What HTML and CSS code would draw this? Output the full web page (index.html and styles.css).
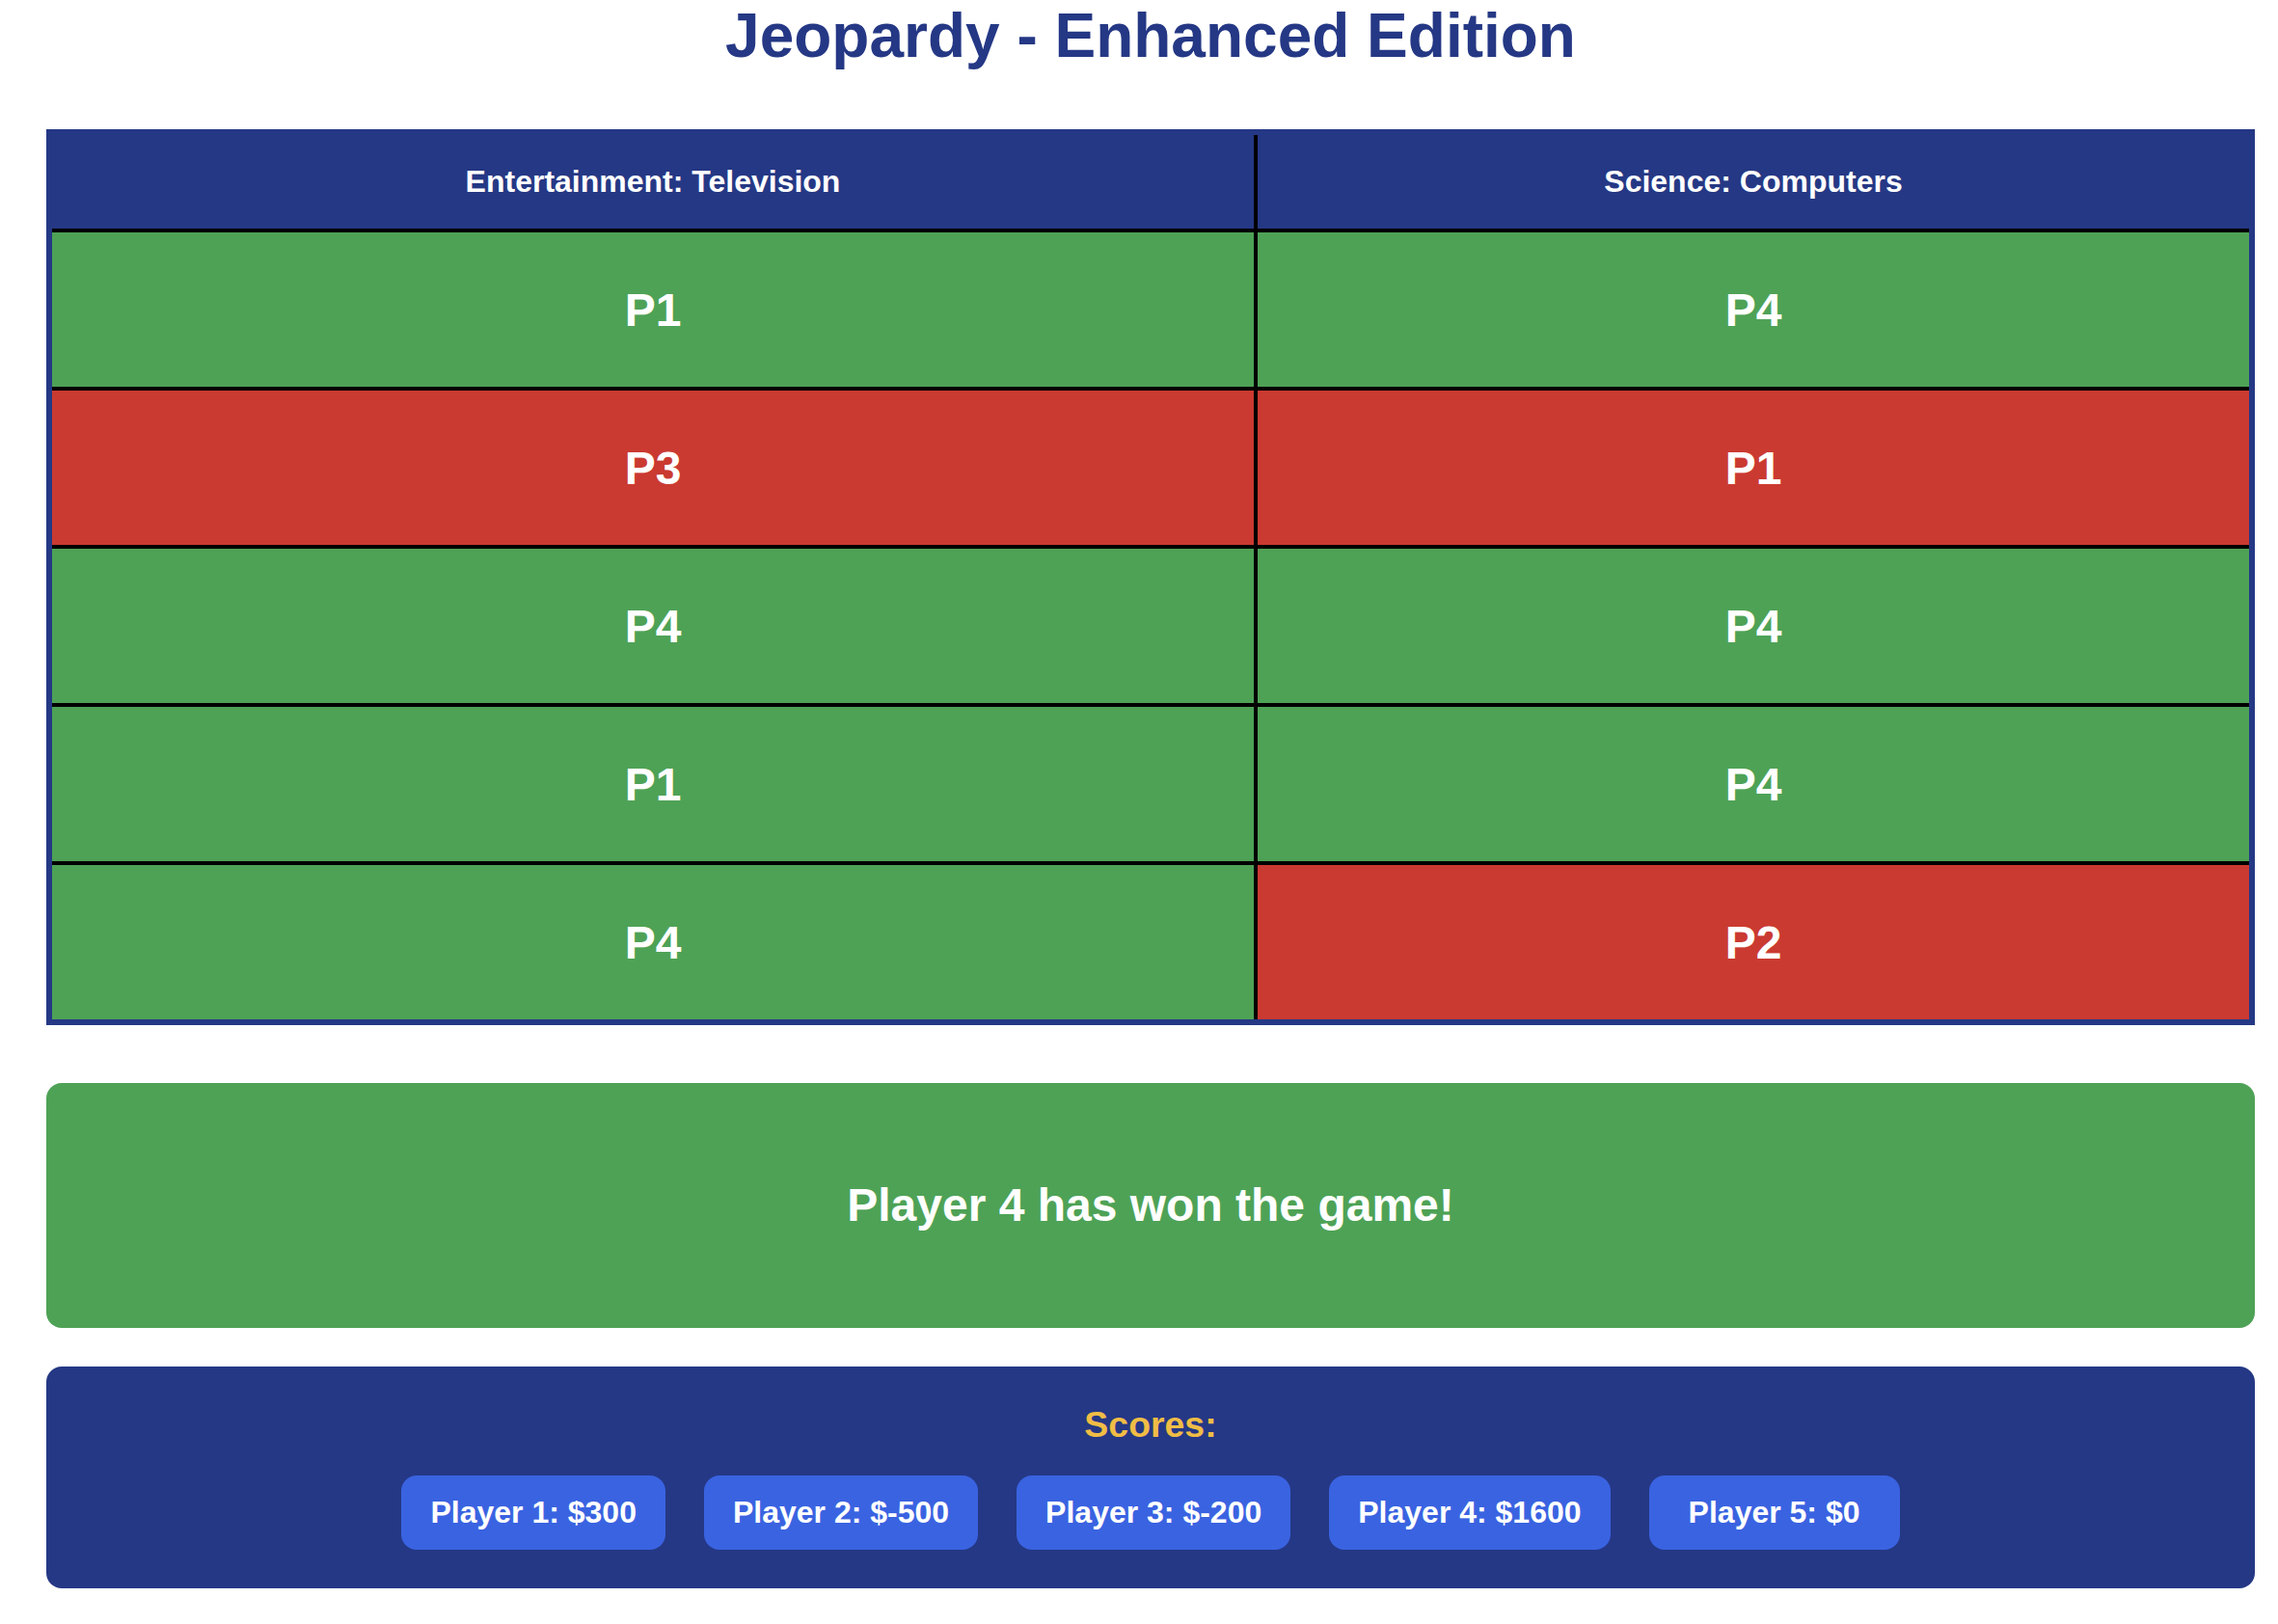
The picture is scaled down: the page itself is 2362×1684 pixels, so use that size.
FILE: index.html
```html
<!DOCTYPE html>
<html lang="en">
<head>
<meta charset="utf-8">
<title>Jeopardy - Enhanced Edition</title>
<link rel="stylesheet" href="styles.css">
</head>
<body>
<div class="page">
  <h1 class="title">Jeopardy - Enhanced Edition</h1>
  <div class="board">
    <div class="cell head">Entertainment: Television</div>
    <div class="cell head">Science: Computers</div>
    <div class="cell right">P1</div>
    <div class="cell right">P4</div>
    <div class="cell wrong">P3</div>
    <div class="cell wrong">P1</div>
    <div class="cell right">P4</div>
    <div class="cell right">P4</div>
    <div class="cell right">P1</div>
    <div class="cell right">P4</div>
    <div class="cell right">P4</div>
    <div class="cell wrong">P2</div>
  </div>
  <div class="winner">Player 4 has won the game!</div>
  <div class="scores">
    <h3 class="scores-title">Scores:</h3>
    <div class="chips">
      <span class="chip">Player 1: $300</span>
      <span class="chip">Player 2: $-500</span>
      <span class="chip">Player 3: $-200</span>
      <span class="chip">Player 4: $1600</span>
      <span class="chip">Player 5: $0</span>
    </div>
  </div>
</div>
</body>
</html>
```
FILE: styles.css
```css
html, body {
  margin: 0;
  padding: 0;
  background: #ffffff;
}
body {
  font-family: "Liberation Sans", Arial, sans-serif;
  font-size: 32px;
  padding: 0 24px 0 48px;
}
.page {
  display: flex;
  flex-direction: column;
}
.title {
  margin: 0 0 60px 0;
  font-size: 64px;
  font-weight: bold;
  text-align: center;
  color: #253885;
  line-height: normal;
}
.board {
  display: grid;
  grid-template-columns: 1246fr 1028fr;
  grid-template-rows: 97px repeat(5, 160px);
  gap: 4px;
  background: #000000;
  border: 6px solid #253885;
}
.cell {
  display: flex;
  align-items: center;
  justify-content: center;
  color: #ffffff;
  font-weight: bold;
  font-size: 48px;
}
.cell.head {
  background: #253885;
  font-size: 32px;
}
.cell.right {
  background: #4ea256;
}
.cell.wrong {
  background: #ca3a31;
}
.winner {
  margin-top: 60px;
  background: #4ea256;
  border-radius: 16px;
  color: #ffffff;
  font-weight: bold;
  font-size: 48px;
  line-height: 56px;
  padding: 99px 40px;
  text-align: center;
}
.scores {
  margin-top: 40px;
  background: #253885;
  border-radius: 16px;
  padding: 39px 40px 40px;
  text-align: center;
}
.scores-title {
  margin: 0 0 31px 0;
  font-size: 37.44px;
  line-height: normal;
  color: #f0bd45;
}
.chips {
  display: flex;
  justify-content: center;
  gap: 40px;
}
.chip {
  min-width: 200px;
  text-align: center;
  background: #3a63e1;
  color: #ffffff;
  font-weight: bold;
  font-size: 32px;
  line-height: 37px;
  padding: 20px 30px;
  border-radius: 16px;
}
```
